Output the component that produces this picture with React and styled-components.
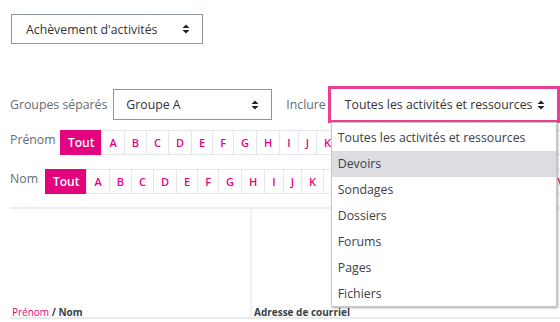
import React from 'react'
import styled, { createGlobalStyle } from 'styled-components'

const Global = createGlobalStyle`
    body {
        margin: 0;
        background: #fff;
        font-family: "Open Sans", "Noto Sans", sans-serif;
        color: #333;
        overflow: hidden;
    }
`;

const Page = styled.div`
    width: 560px;
    height: 322px;
    overflow: hidden;
    padding: 14px 0 0 10px;
    box-sizing: border-box;
`;

const Select = styled.div`
    box-sizing: border-box;
    flex-shrink: 0;
    display: flex;
    align-items: center;
    justify-content: space-between;
    white-space: nowrap;
    width: ${p => p.w}px;
    height: ${p => p.h || 31}px;
    padding: 0 12px 0 ${p => p.pl || 14}px;
    border: ${p => p.focus ? '3px solid #ea3f92' : '1px solid #8f959e'};
    font-size: 12.3px;
    color: #333;
    background: #fff;
`;

const TopSelect = styled(Select)`
    margin-left: 1px;
`;

const FilterRow = styled.div`
    display: flex;
    align-items: center;
    margin-top: 42px;
`;

const Label = styled.span`
    flex-shrink: 0;
    white-space: nowrap;
    font-size: 12.3px;
    color: #666c73;
    margin: 0 ${p => p.mr}px 0 ${p => p.ml || 0}px;
`;

const Include = styled.div`
    position: relative;
    flex-shrink: 0;
`;

const Menu = styled.div`
    position: absolute;
    top: 36px;
    left: 3px;
    width: 226px;
    height: 185px;
    box-sizing: border-box;
    background: #fff;
    border: 1px solid #c8c8c8;
    box-shadow: 1px 1px 2px rgba(0,0,0,0.35);
    padding-top: 2px;
    z-index: 5;
`;

const Option = styled.div`
    height: 26px;
    line-height: 26px;
    padding-left: 6px;
    font-size: 12.3px;
    color: #3d4146;
    white-space: nowrap;
    background: ${p => p.active ? '#dcdce1' : 'transparent'};
`;

const InitialsRow = styled.div`
    display: flex;
    align-items: center;
    margin-top: ${p => p.mt}px;
    white-space: nowrap;
`;

const InitialsLabel = styled.span`
    flex-shrink: 0;
    font-size: 12.3px;
    color: #666c73;
    width: ${p => p.w}px;
    margin-top: -6px;
`;

const Letters = styled.div`
    display: flex;
    flex-shrink: 0;
`;

const Letter = styled.span`
    box-sizing: border-box;
    height: 25px;
    line-height: 23px;
    padding: 0 7px;
    border: 1px solid #e3e5e8;
    margin-left: -1px;
    font-size: ${p => p.all ? 12 : 11}px;
    font-weight: 600;
    color: ${p => p.all ? '#fff' : '#e3037f'};
    background: ${p => p.all ? '#e3037f' : '#fff'};
    border-color: ${p => p.all ? '#e3037f' : '#e3e5e8'};
`;

const Table = styled.div`
    display: grid;
    grid-template-columns: 240px 1fr;
    margin-top: 13px;
    border-top: 2px solid #e9ebee;
    border-bottom: 2px solid #e9ebee;
    height: 112px;
    box-sizing: border-box;
`;

const HeadCell = styled.div`
    display: flex;
    align-items: flex-end;
    padding: 0 0 0 2px;
    font-size: 10px;
    line-height: 10px;
    font-weight: 700;
    color: #3a3f44;
    white-space: nowrap;
    border-left: ${p => p.divider ? '2px solid #f0f1f3' : 'none'};
`;

const Pink = styled.span`
    color: #e3037f;
    font-weight: 400;
`;

const Arrows = () => (
    <svg width="8" height="10" viewBox="0 0 8 10">
        <path d="M4 0.5 L7.5 4 L0.5 4 Z M4 9.5 L7.5 6 L0.5 6 Z" fill="#222" />
    </svg>
);

const alphabet = 'ABCDEFGHIJKLMNOPQRSTUVWXYZ'.split('');

const options = ['Toutes les activités et ressources', 'Devoirs', 'Sondages', 'Dossiers', 'Forums', 'Pages', 'Fichiers'];

const Initials = ({label, w, mt}) => (
    <InitialsRow mt={mt}>
        <InitialsLabel w={w}>{label}</InitialsLabel>
        <Letters>
            <Letter all>Tout</Letter>
            {alphabet.map(l => <Letter key={l}>{l}</Letter>)}
        </Letters>
    </InitialsRow>
);

export default function App() {
    return (
        <Page>
            <Global />
            <TopSelect w={192} h={30}>
                <span>Achèvement d'activités</span>
                <Arrows />
            </TopSelect>

            <FilterRow>
                <Label mr={6}>Groupes séparés</Label>
                <Select w={159} pl={12}>
                    <span>Groupe A</span>
                    <Arrows />
                </Select>
                <Label ml={14} mr={2}>Inclure</Label>
                <Include>
                    <Select w={232} h={37} pl={14} focus>
                        <span>Toutes les activités et ressources</span>
                        <Arrows />
                    </Select>
                    <Menu>
                        {options.map((o, i) => <Option key={o} active={i === 1}>{o}</Option>)}
                    </Menu>
                </Include>
            </FilterRow>

            <Initials label="Prénom" w={51} mt={7} />
            <Initials label="Nom" w={36} mt={14} />

            <Table>
                <HeadCell><Pink>Prénom</Pink>&nbsp;/ Nom</HeadCell>
                <HeadCell divider>Adresse de courriel</HeadCell>
            </Table>
        </Page>
    )
}
